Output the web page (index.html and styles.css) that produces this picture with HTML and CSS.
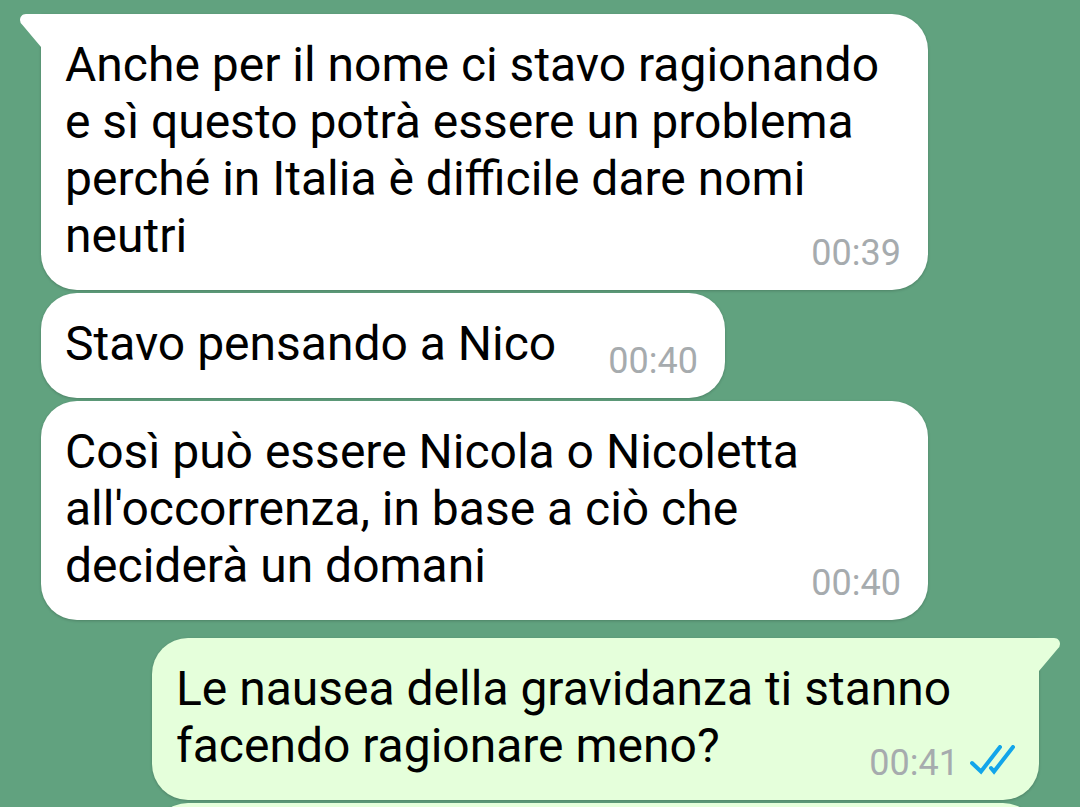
FILE: index.html
```html
<!DOCTYPE html>
<html lang="it">
<head>
<meta charset="utf-8">
<meta name="viewport" content="width=device-width, initial-scale=1">
<title>Chat</title>
<link rel="stylesheet" href="styles.css">
</head>
<body>
<main class="chat">
  <article class="bubble received first">
    <svg class="tail tail-left" viewBox="0 0 42 38" aria-hidden="true"><path d="M42 0H6C2 0 0 3 0 6Q0 9 2.500 11L21 33V38H42Z"/></svg>
    <p class="text">Anche per il nome ci stavo ragionando e sì questo potrà essere un problema perché in Italia è difficile dare nomi neutri <span class="meta"><time>00:39</time></span></p>
  </article>
  <article class="bubble received short">
    <p class="text">Stavo pensando a Nico<span class="meta"><time>00:40</time></span></p>
  </article>
  <article class="bubble received">
    <p class="text">Così può essere Nicola o Nicoletta all'occorrenza, in base a ciò che deciderà un domani <span class="meta"><time>00:40</time></span></p>
  </article>
  <article class="bubble sent first">
    <svg class="tail tail-right" viewBox="0 0 42 38" aria-hidden="true"><path d="M0 0H36C40 0 42 3 42 6Q42 9 39.500 11L21 33V38H0Z"/></svg>
    <p class="text">Le nausea della gravidanza ti stanno facendo ragionare meno? <span class="meta"><time>00:41</time><svg class="ticks" viewBox="0 0 46 36" role="img" aria-label="Letto"><path d="M2 18L11 26.500L30 2M21 23L24 26.500L43 2"/></svg></span></p>
  </article>
  <article class="bubble sent next"></article>
</main>
</body>
</html>
```
FILE: styles.css
```css
* {
  box-sizing: border-box;
}

body {
  margin: 0;
  background: #61a27f;
  color: #000;
  font-family: Roboto, sans-serif;
}

.chat {
  display: flex;
  flex-direction: column;
  gap: 3px;
  height: 100vh;
  padding: 14px 41px 0;
  overflow: hidden;
}

.bubble {
  position: relative;
  flex-shrink: 0;
  width: 100%;
  max-width: 887px;
  padding: 22px 27px 17px 24px;
  border-radius: 36px;
  box-shadow: 0 1px 3px rgb(0 0 0 / 20%);
}

.received {
  align-self: flex-start;
  background: #fff;
}

.received.first {
  border-top-left-radius: 0;
}

.sent {
  align-self: flex-end;
  padding-right: 23px;
  background: #e5ffdb;
}

.sent.first {
  margin-top: 15px;
  border-top-right-radius: 0;
}

.short {
  width: auto;
}

.text {
  display: flow-root;
  margin: 0;
  font-size: 48px;
  line-height: 57px;
}

/* The time sits at the end of the last line, slightly below it. */
.meta {
  float: right;
  display: flex;
  align-items: center;
  gap: 11px;
  height: 40px;
  margin: 26px 0 0 52px;
  color: #a6abae;
  font-size: 36px;
  line-height: 40px;
}

.tail {
  position: absolute;
  top: 0;
  width: 42px;
  height: 38px;
}

.tail-left {
  left: -21px;
  fill: #fff;
}

.tail-right {
  right: -21px;
  fill: #e5ffdb;
}

.ticks {
  width: 46px;
  height: 36px;
  fill: none;
  stroke: #12a5ea;
  stroke-width: 4;
  stroke-linecap: round;
}

.next {
  min-height: 100px;
}
```
